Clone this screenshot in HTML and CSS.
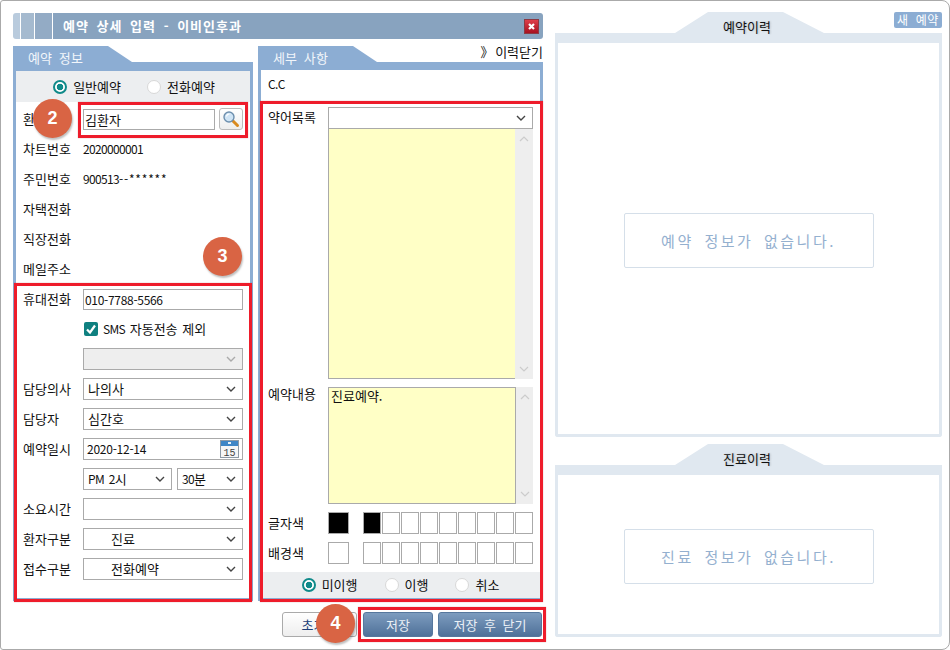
FILE: index.html
```html
<!DOCTYPE html>
<html lang="ko">
<head>
    <meta charset="UTF-8">
    <meta name="viewport" content="width=device-width, initial-scale=1.0">
    <title>예약 상세 입력</title>
    <link rel="stylesheet" href="styles.css">
</head>
<body>
    <div class="window">
        <div class="main">
            <div class="titlebar">
                <span class="stripe stripe1"></span>
                <span class="stripe stripe2"></span>
                <span class="stripe stripe3"></span>
                <div class="title">
                    <span>예약 상세 입력 - 이비인후과</span>
                    <svg class="close" width="15" height="15" viewBox="0 0 15 15">
                        <defs>
                            <linearGradient id="closeFill" x1="0" y1="0" x2="0" y2="1">
                                <stop offset="0" stop-color="#e0404c"/>
                                <stop offset="1" stop-color="#a50f1e"/>
                            </linearGradient>
                        </defs>
                        <rect x="0.5" y="0.5" width="14" height="14" fill="url(#closeFill)" stroke="#8c3a44"/>
                        <path d="M5 5l5 5M10 5l-5 5" stroke="#fff" stroke-width="2.2"/>
                    </svg>
                </div>
            </div>

            <div class="columns">
                <section class="panel panel-left">
                    <div class="panel-head"><span>예약 정보</span></div>
                    <div class="panel-body">
                        <div class="radio-band booking">
                            <span class="radio on"></span><span class="radio-label">일반예약</span>
                            <span class="radio"></span><span class="radio-label">전화예약</span>
                        </div>
                        <div class="rows">
                            <div class="row">
                                <label class="row-label">환자명</label>
                                <input class="field patient" type="text" value="김환자">
                                <button class="search" type="button">
                                    <svg width="18" height="18" viewBox="0 0 18 18">
                                        <path d="M10.5 10.5l5 5" stroke="#d98a1f" stroke-width="3" stroke-linecap="round"/>
                                        <circle cx="7" cy="7" r="5" fill="#cfe4f5" stroke="#6d8fae" stroke-width="1.4"/>
                                        <path d="M4.5 6.5a3 3 0 0 1 3-2.5" stroke="#fff" stroke-width="1.2" fill="none"/>
                                    </svg>
                                </button>
                            </div>
                            <div class="row"><span class="row-label">차트번호</span><span class="num">2020000001</span></div>
                            <div class="row"><span class="row-label">주민번호</span><span class="num">900513</span><span class="mask">--******</span></div>
                            <div class="row"><span class="row-label">자택전화</span></div>
                            <div class="row"><span class="row-label">직장전화</span></div>
                            <div class="row"><span class="row-label">메일주소</span></div>
                            <div class="row">
                                <label class="row-label">휴대전화</label>
                                <input class="field num" type="text" value="010-7788-5566">
                            </div>
                            <div class="row">
                                <span class="row-label"></span>
                                <span class="checkbox">
                                    <svg width="14" height="14" viewBox="0 0 14 14"><path d="M3 7.5l3 3 5-7" stroke="#fff" stroke-width="2.2" fill="none"/></svg>
                                </span>
                                <span class="check-label"><span class="num">SMS</span> 자동전송 제외</span>
                            </div>
                            <div class="row">
                                <span class="row-label"></span>
                                <div class="select disabled"><span></span><svg class="chevron" width="10" height="6" viewBox="0 0 10 6"><path d="M1 1l4 4 4-4" fill="none" stroke="currentColor" stroke-width="1.4"/></svg></div>
                            </div>
                            <div class="row">
                                <span class="row-label">담당의사</span>
                                <div class="select"><span>나의사</span><svg class="chevron" width="10" height="6" viewBox="0 0 10 6"><path d="M1 1l4 4 4-4" fill="none" stroke="currentColor" stroke-width="1.4"/></svg></div>
                            </div>
                            <div class="row">
                                <span class="row-label">담당자</span>
                                <div class="select"><span>심간호</span><svg class="chevron" width="10" height="6" viewBox="0 0 10 6"><path d="M1 1l4 4 4-4" fill="none" stroke="currentColor" stroke-width="1.4"/></svg></div>
                            </div>
                            <div class="row">
                                <span class="row-label">예약일시</span>
                                <div class="select date">
                                    <span class="num">2020-12-14</span>
                                    <svg width="19" height="18" viewBox="0 0 19 18">
                                        <rect x="0.5" y="0.5" width="18" height="17" fill="#f6f6f6" stroke="#8d9aa6"/>
                                        <rect x="1" y="1" width="17" height="5" fill="#3f86c6"/>
                                        <rect x="8" y="2" width="3" height="2" fill="#e8f2fa"/>
                                        <text x="9.5" y="15.5" text-anchor="middle" class="cal-day">15</text>
                                    </svg>
                                </div>
                            </div>
                            <div class="row time-row">
                                <span class="row-label"></span>
                                <div class="select hour"><span><span class="num">PM 2</span>시</span><svg class="chevron" width="10" height="6" viewBox="0 0 10 6"><path d="M1 1l4 4 4-4" fill="none" stroke="currentColor" stroke-width="1.4"/></svg></div>
                                <div class="select minute"><span><span class="num">30</span>분</span><svg class="chevron" width="10" height="6" viewBox="0 0 10 6"><path d="M1 1l4 4 4-4" fill="none" stroke="currentColor" stroke-width="1.4"/></svg></div>
                            </div>
                            <div class="row">
                                <span class="row-label">소요시간</span>
                                <div class="select"><span></span><svg class="chevron" width="10" height="6" viewBox="0 0 10 6"><path d="M1 1l4 4 4-4" fill="none" stroke="currentColor" stroke-width="1.4"/></svg></div>
                            </div>
                            <div class="row">
                                <span class="row-label">환자구분</span>
                                <div class="select indent"><span>진료</span><svg class="chevron" width="10" height="6" viewBox="0 0 10 6"><path d="M1 1l4 4 4-4" fill="none" stroke="currentColor" stroke-width="1.4"/></svg></div>
                            </div>
                            <div class="row">
                                <span class="row-label">접수구분</span>
                                <div class="select indent"><span>전화예약</span><svg class="chevron" width="10" height="6" viewBox="0 0 10 6"><path d="M1 1l4 4 4-4" fill="none" stroke="currentColor" stroke-width="1.4"/></svg></div>
                            </div>
                        </div>
                    </div>
                </section>

                <div class="middle">
                    <section class="panel panel-mid">
                        <a class="close-link">》 이력닫기</a>
                        <div class="panel-head"><span>세부 사항</span></div>
                        <div class="panel-body">
                            <div class="cc num">C.C</div>
                            <div class="detail">
                                <div class="detail-row">
                                    <span class="row-label">약어목록</span>
                                    <div class="detail-stack">
                                        <div class="select"><span></span><svg class="chevron" width="10" height="6" viewBox="0 0 10 6"><path d="M1 1l4 4 4-4" fill="none" stroke="currentColor" stroke-width="1.4"/></svg></div>
                                        <div class="memo memo-short">
                                            <div class="memo-text"></div>
                                            <div class="memo-bar">
                                                <svg width="10" height="6" viewBox="0 0 10 6"><path d="M1 5l4-4 4 4" fill="none" stroke="#ccc" stroke-width="1.2"/></svg>
                                                <svg width="10" height="6" viewBox="0 0 10 6"><path d="M1 1l4 4 4-4" fill="none" stroke="#ccc" stroke-width="1.2"/></svg>
                                            </div>
                                        </div>
                                    </div>
                                </div>
                                <div class="detail-row">
                                    <span class="row-label top">예약내용</span>
                                    <div class="memo memo-content">
                                        <div class="memo-text bordered">진료예약.</div>
                                        <div class="memo-bar">
                                            <svg width="10" height="6" viewBox="0 0 10 6"><path d="M1 5l4-4 4 4" fill="none" stroke="#ccc" stroke-width="1.2"/></svg>
                                            <svg width="10" height="6" viewBox="0 0 10 6"><path d="M1 1l4 4 4-4" fill="none" stroke="#ccc" stroke-width="1.2"/></svg>
                                        </div>
                                    </div>
                                </div>
                                <div class="color-row">
                                    <span class="row-label">글자색</span>
                                    <span class="swatch-big black"></span>
                                    <div class="palette">
                                        <span class="swatch black"></span><span class="swatch"></span><span class="swatch"></span><span class="swatch"></span><span class="swatch"></span><span class="swatch"></span><span class="swatch"></span><span class="swatch"></span><span class="swatch"></span>
                                    </div>
                                </div>
                                <div class="color-row">
                                    <span class="row-label">배경색</span>
                                    <span class="swatch-big"></span>
                                    <div class="palette">
                                        <span class="swatch"></span><span class="swatch"></span><span class="swatch"></span><span class="swatch"></span><span class="swatch"></span><span class="swatch"></span><span class="swatch"></span><span class="swatch"></span><span class="swatch"></span>
                                    </div>
                                </div>
                            </div>
                            <div class="radio-band status">
                                <span class="radio on"></span><span class="radio-label">미이행</span>
                                <span class="radio"></span><span class="radio-label">이행</span>
                                <span class="radio"></span><span class="radio-label">취소</span>
                            </div>
                        </div>
                    </section>
                    <div class="actions">
                        <button class="btn btn-reset" type="button">초기화</button>
                        <button class="btn btn-save" type="button">저장</button>
                        <button class="btn btn-save-close" type="button">저장 후 닫기</button>
                    </div>
                </div>
            </div>
        </div>

        <aside class="side">
            <a class="new-btn">새 예약</a>
            <section class="history history-top">
                <div class="history-head"><span>예약이력</span></div>
                <div class="history-body"><div class="empty">예약 정보가 없습니다.</div></div>
            </section>
            <section class="history history-bottom">
                <div class="history-head"><span>진료이력</span></div>
                <div class="history-body"><div class="empty">진료 정보가 없습니다.</div></div>
            </section>
        </aside>

        <!-- annotations drawn over the form -->
        <div class="mark mark-patient"></div>
        <div class="mark mark-contact"></div>
        <div class="mark mark-detail"></div>
        <div class="mark mark-actions"></div>
        <div class="badge badge2">2</div>
        <div class="badge badge3">3</div>
        <div class="badge badge4">4</div>
    </div>
</body>
</html>
```

FILE: styles.css
```css
* {
    box-sizing: border-box;
}

html, body {
    margin: 0;
    height: 100%;
    overflow: hidden;
}

body {
    font-family: "Noto Sans CJK KR", "Noto Sans", sans-serif;
    font-size: 13px;
    line-height: 14px;
    word-spacing: 3px;
    color: #111;
    background-color: #fff;
}

.num {
    font-size: 12px;
    letter-spacing: -0.66px;
    word-spacing: 2px;
}

.mask {
    font-size: 12px;
    letter-spacing: 0.8px;
}

.window {
    position: relative;
    display: flex;
    gap: 12px;
    width: 950px;
    height: 650px;
    padding: 11px 7px 0 12px;
    border: 1px solid #aaa;
    border-radius: 3px 8px 8px 3px;
}

.main {
    width: 530px;
    margin-top: 1px;
}

/* title bar */
.titlebar {
    display: flex;
    height: 26px;
    margin-bottom: 7px;
}

.stripe {
    height: 100%;
}

.stripe1 {
    width: 7px;
    margin-right: 1px;
    border-radius: 3px 0 0 3px;
    background-color: #b9cbdd;
}

.stripe2 {
    width: 13px;
    margin-right: 1px;
    background-color: #a5bacf;
}

.stripe3 {
    width: 17px;
    margin-right: 1px;
    background-color: #93abc5;
}

.title {
    flex: 1;
    display: flex;
    align-items: center;
    justify-content: space-between;
    padding: 0 4px 0 10px;
    border-radius: 0 3px 3px 0;
    background-color: #88a3bf;
    color: #fff;
    font-weight: 700;
    letter-spacing: 1px;
}

.columns {
    display: flex;
    gap: 5px;
}

/* panels */
.panel {
    position: relative;
    display: flex;
    flex-direction: column;
    height: 555px;
}

.panel-left {
    width: 240px;
}

.panel-mid {
    width: 285px;
}

.panel-head {
    height: 25px;
    padding: 5px 0 0 15px;
    color: #f2f6fb;
    letter-spacing: 0.1px;
    background-color: #8cadd3;
    clip-path: polygon(0 0, 95px 0, 119px 16px, 100% 16px, 100% 100%, 0 100%);
}

.panel-body {
    flex: 1;
    display: flex;
    flex-direction: column;
    border: 3px solid #8cadd3;
    border-top: none;
}

.close-link {
    position: absolute;
    top: -1px;
    right: 0;
    word-spacing: -2px;
}

.radio-band {
    display: flex;
    align-items: center;
    justify-content: center;
    height: 31px;
    background-color: #eceef0;
}

.booking {
    padding-left: 2px;
}

.radio {
    width: 14px;
    height: 14px;
    margin-right: 6px;
    border: 1px solid #d8d8d8;
    border-radius: 50%;
    background-color: #fff;
}

.radio.on {
    border: 2px solid #0f8a8a;
    background: radial-gradient(circle, #0f8a8a 3px, #fff 3.6px);
}

.radio-label {
    margin-right: 26px;
}

.radio-label:last-child {
    margin-right: 0;
}

.rows {
    padding-top: 2px;
}

.row {
    display: flex;
    align-items: center;
    height: 30px;
    padding: 0 7px;
}

.row-label {
    flex: none;
    width: 60px;
}

.field {
    flex: 1;
    min-width: 0;
    height: 21px;
    padding: 0 1px;
    border: 1px solid #aaa;
    font-family: inherit;
    font-size: 13px;
    color: #111;
}

.field.num {
    font-size: 12px;
    letter-spacing: -0.3px;
}

.patient {
    flex: none;
    width: 132px;
}

.search {
    display: flex;
    align-items: center;
    justify-content: center;
    width: 24px;
    height: 22px;
    margin-left: 4px;
    padding: 0;
    border: 1px solid #bbb;
    border-radius: 3px;
    background: linear-gradient(#fff, #eee);
}

.checkbox {
    display: flex;
    width: 14px;
    height: 14px;
    margin: 0 5px 0 1px;
    border-radius: 2px;
    background-color: #0f8080;
}

.check-label {
    word-spacing: 1px;
}

.select {
    flex: 1;
    display: flex;
    align-items: center;
    justify-content: space-between;
    min-width: 0;
    height: 22px;
    padding: 0 6px 0 4px;
    border: 1px solid #aaa;
    background-color: #fff;
}

.chevron {
    color: #444;
}

.select.disabled {
    background-color: #eee;
}

.select.disabled .chevron {
    color: #aaa;
}

.select.date {
    padding: 0 3px 0 3px;
}

.select.date .num {
    letter-spacing: -0.25px;
}

.select.indent {
    padding-left: 27px;
}

.hour {
    flex: none;
    width: 89px;
    margin-right: 5px;
}

.minute {
    flex: none;
    width: 66px;
}

.cal-day {
    font-family: "Liberation Mono", monospace;
    font-size: 10px;
    fill: #444;
}

/* detail column */
.cc {
    height: 30px;
    padding: 7px 7px 0;
}

.detail {
    flex: 1;
    padding: 7px 7px 0;
}

.detail-row {
    display: flex;
    margin-bottom: 8px;
}

.detail-row .row-label {
    padding-top: 3px;
}

.detail-row .row-label.top {
    padding-top: 0;
}

.detail-stack {
    flex: 1;
}

.detail-stack .select {
    height: 22px;
}

.memo {
    display: flex;
}

.memo-short {
    height: 250px;
}

.memo-content {
    flex: 1;
    height: 117px;
}

.memo-text {
    flex: 1;
    padding: 1px 2px;
    border-left: 1px solid #aaa;
    border-bottom: 1px solid #aaa;
    background-color: #ffffc6;
}

.memo-text.bordered {
    border: 1px solid #aaa;
}

.memo-bar {
    display: flex;
    flex-direction: column;
    align-items: center;
    justify-content: space-between;
    width: 17px;
    padding: 7px 0;
    background-color: #eee;
}

.memo-short .memo-bar {
    width: 18px;
}

.color-row {
    display: flex;
    align-items: center;
    height: 22px;
    margin-bottom: 8px;
}

.swatch-big {
    width: 21px;
    height: 22px;
    margin-right: 14px;
    border: 1px solid #aaa;
}

.palette {
    display: flex;
    gap: 1px;
}

.swatch {
    width: 18px;
    height: 22px;
    border: 1px solid #aaa;
}

.black {
    background-color: #000;
}

.status {
    height: 26px;
}

.status .radio-label {
    margin-right: 27px;
}

.status .radio-label:last-child {
    margin-right: 0;
}

/* bottom buttons */
.actions {
    display: flex;
    justify-content: flex-end;
    gap: 5px;
    margin-top: 11px;
    padding-right: 1px;
}

.btn {
    height: 25px;
    padding: 0;
    border-radius: 3px;
    font-family: inherit;
    font-size: 13px;
    word-spacing: 3px;
}

.btn-reset {
    width: 75px;
    margin-right: 1px;
    border: 1px solid #aaa;
    background: linear-gradient(#fff, #eee);
    color: #1e3e78;
}

.btn-save, .btn-save-close {
    border: 1px solid #56779d;
    background: linear-gradient(#7d9cbf, #4f7199);
    color: #eaf0f6;
}

.btn-save {
    width: 70px;
}

.btn-save-close {
    width: 104px;
}

/* history column */
.side {
    position: relative;
    display: flex;
    flex-direction: column;
    gap: 7px;
    width: 387px;
}

.new-btn {
    position: absolute;
    top: 0;
    right: 0;
    z-index: 1;
    width: 48px;
    height: 16px;
    border-radius: 2px;
    background-color: #8cadd3;
    color: #fff;
    font-size: 12px;
    line-height: 15px;
    text-align: center;
    letter-spacing: 0.6px;
}

.history {
    display: flex;
    flex-direction: column;
}

.history-top {
    height: 425px;
}

.history-bottom {
    height: 193px;
}

.history-head {
    height: 31px;
    padding-top: 9px;
    line-height: 12px;
    text-align: center;
    text-indent: -3px;
    background-color: #e0e8f0;
    clip-path: polygon(0 21px, 120px 21px, 153px 0, 228px 0, 269px 21px, 100% 21px, 100% 100%, 0 100%);
}

.history-head span {
    text-shadow: 1px 0 2px rgba(0, 0, 0, 0.2);
}

.history-body {
    flex: 1;
    display: flex;
    align-items: center;
    justify-content: center;
    padding-top: 4px;
    border: 3px solid #e0e8f0;
    border-top: none;
    border-radius: 0 0 3px 3px;
}

.empty {
    width: 250px;
    height: 55px;
    border: 1px solid #d5dfe9;
    border-radius: 2px;
    color: #94b0cf;
    font-size: 15px;
    line-height: 54px;
    text-align: center;
    letter-spacing: 2.5px;
    word-spacing: 4px;
}

/* annotations */
.mark {
    position: absolute;
    border: 3px solid #ee1c2b;
    box-shadow: 0 0 1px rgba(120, 0, 0, 0.4);
}

.mark-patient {
    left: 77px;
    top: 101px;
    width: 170px;
    height: 36px;
}

.mark-contact {
    left: 13px;
    top: 282px;
    width: 238px;
    height: 319px;
}

.mark-detail {
    left: 259px;
    top: 100px;
    width: 283px;
    height: 501px;
}

.mark-actions {
    left: 357px;
    top: 606px;
    width: 188px;
    height: 35px;
}

.badge {
    position: absolute;
    width: 39px;
    height: 39px;
    border-radius: 50%;
    background-color: #d96444;
    box-shadow: 1px 2px 2px rgba(0, 0, 0, 0.25);
    color: #fff;
    font-family: "Liberation Sans", sans-serif;
    font-size: 18px;
    font-weight: 700;
    line-height: 38px;
    text-align: center;
}

.badge2 {
    left: 32px;
    top: 98px;
}

.badge3 {
    left: 202px;
    top: 236px;
}

.badge4 {
    left: 315px;
    top: 603px;
}
```
